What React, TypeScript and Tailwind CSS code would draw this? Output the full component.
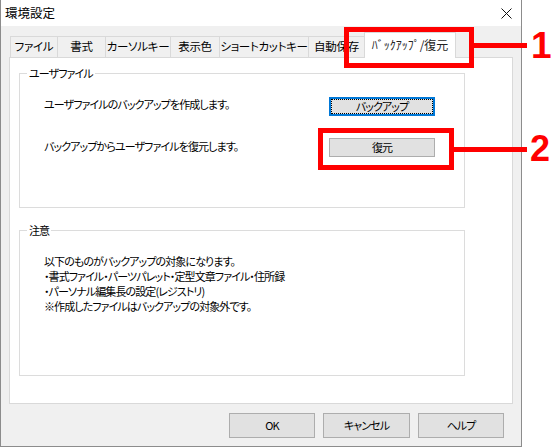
const tabs = [
  { label: "ファイル", w: "w-[47px]" },
  { label: "書式", w: "w-[48px]" },
  { label: "カーソルキー", w: "w-[65px]" },
  { label: "表示色", w: "w-[49px]" },
  { label: "ショートカットキー", w: "w-[89px]" },
  { label: "自動保存", w: "w-[56px]" },
]

const notes = [
  "以下のものがバックアップの対象になります。",
  "・書式ファイル・パーツパレット・定型文章ファイル・住所録",
  "・パーソナル編集長の設定(レジストリ)",
  "※作成したファイルはバックアップの対象外です。",
]

function GroupBox({ label, className, children }: { label: string; className: string; children: React.ReactNode }) {
  return (
    <div className={`relative ml-[9px] w-[446px] border border-[#dcdcdc] ${className}`}>
      <span className="absolute -top-[9px] left-[7px] bg-white px-[2px] leading-[16px]">{label}</span>
      {children}
    </div>
  )
}

function Button({ children, className = "" }: { children: React.ReactNode; className?: string }) {
  return (
    <div className={`flex items-center justify-center border border-[#adadad] bg-[#e1e1e1] ${className}`}>
      {children}
    </div>
  )
}

export default function App() {
  return (
    <div className="relative h-[447px] w-[560px] overflow-hidden bg-white font-['Noto_Sans_CJK_JP',sans-serif] text-[11px] text-black [letter-spacing:-0.9px] [font-feature-settings:'palt']">
      <div className="flex h-[447px] w-[522px] flex-col border border-t-0 border-[#8c8c8c] bg-[#f0f0f0]">
        {/* title bar */}
        <div className="flex h-[26px] items-center justify-between bg-white pl-[4px] pr-[8px]">
          <span className="text-[12.5px] leading-none [letter-spacing:0px] [font-feature-settings:normal]">環境設定</span>
          <svg width="11" height="11" viewBox="0 0 11 11" className="mr-[1px]">
            <path d="M0.5 0.5 L10.5 10.5 M10.5 0.5 L0.5 10.5" stroke="#111" strokeWidth="1" />
          </svg>
        </div>

        <div className="flex flex-1 flex-col px-[8px] pt-[6px]">
          {/* tabs */}
          <div className="flex h-[25px] items-end pl-[1px]">
            {tabs.map((t) => (
              <div
                key={t.label}
                className={`flex h-[21px] items-center justify-center whitespace-nowrap border-t border-l border-[#d9d9d9] bg-[#f0f0f0] text-[11.5px] [letter-spacing:-0.3px] ${t.w}`}
              >
                {t.label}
              </div>
            ))}
            <div className="relative z-10 -mb-px flex h-[26px] w-[92px] items-center justify-center whitespace-nowrap border-x border-t border-[#d9d9d9] bg-white pb-[2px] text-[12px] text-[#222] [letter-spacing:0px] [font-feature-settings:normal]">
              ﾊﾞｯｸｱｯﾌﾟ/復元
            </div>
          </div>

          {/* panel */}
          <div className="flex h-[347px] flex-col border border-[#d9d9d9] bg-white">
            <GroupBox label="ユーザファイル" className="mt-[15px] h-[135px] pt-[23px]">
              <div className="flex h-[19px] items-center">
                <span className="-mt-[5px] w-[309px] pl-[24px] leading-none">ユーザファイルのバックアップを作成します。</span>
                <div className="flex h-[19px] w-[106px] items-center justify-center border-2 border-[#0078d7] bg-[#e1e1e1]">
                  <div className="flex h-[15px] w-[102px] items-center justify-center border border-dotted border-black">
                    バックアップ
                  </div>
                </div>
              </div>
              <div className="mt-[22px] flex h-[19px] items-center">
                <span className="-mt-[2px] w-[309px] pl-[24px] leading-none">バックアップからユーザファイルを復元します。</span>
                <Button className="h-[19px] w-[106px]">復元</Button>
              </div>
            </GroupBox>

            <GroupBox label="注意" className="mt-[22px] h-[146px] pt-[23px] pl-[24px]">
              {notes.map((n) => (
                <div key={n} className="whitespace-nowrap leading-[15px]">
                  {n}
                </div>
              ))}
            </GroupBox>
          </div>

          {/* footer */}
          <div className="flex justify-end gap-[8px] pt-[9px] pr-[9px]">
            <Button className="h-[25px] w-[86px]">OK</Button>
            <Button className="h-[25px] w-[87px]">キャンセル</Button>
            <Button className="h-[25px] w-[86px]">ヘルプ</Button>
          </div>
        </div>
      </div>

      {/* annotations */}
      <div className="absolute left-[344px] top-[27px] h-[41px] w-[130px] border-[5px] border-[#ff0000]" />
      <div className="absolute left-[473px] top-[43px] h-[5px] w-[54px] bg-[#ff0000]" />
      <span className="absolute left-[531px] top-[27px] font-['Liberation_Sans',sans-serif] text-[37px] font-bold leading-none text-[#ff0000] [letter-spacing:0px]">1</span>

      <div className="absolute left-[318px] top-[128px] h-[42px] w-[136px] border-[5px] border-[#ff0000]" />
      <div className="absolute left-[453px] top-[147px] h-[5px] w-[74px] bg-[#ff0000]" />
      <span className="absolute left-[530px] top-[131px] font-['Liberation_Sans',sans-serif] text-[36px] font-bold leading-none text-[#ff0000] [letter-spacing:0px]">2</span>
    </div>
  )
}
